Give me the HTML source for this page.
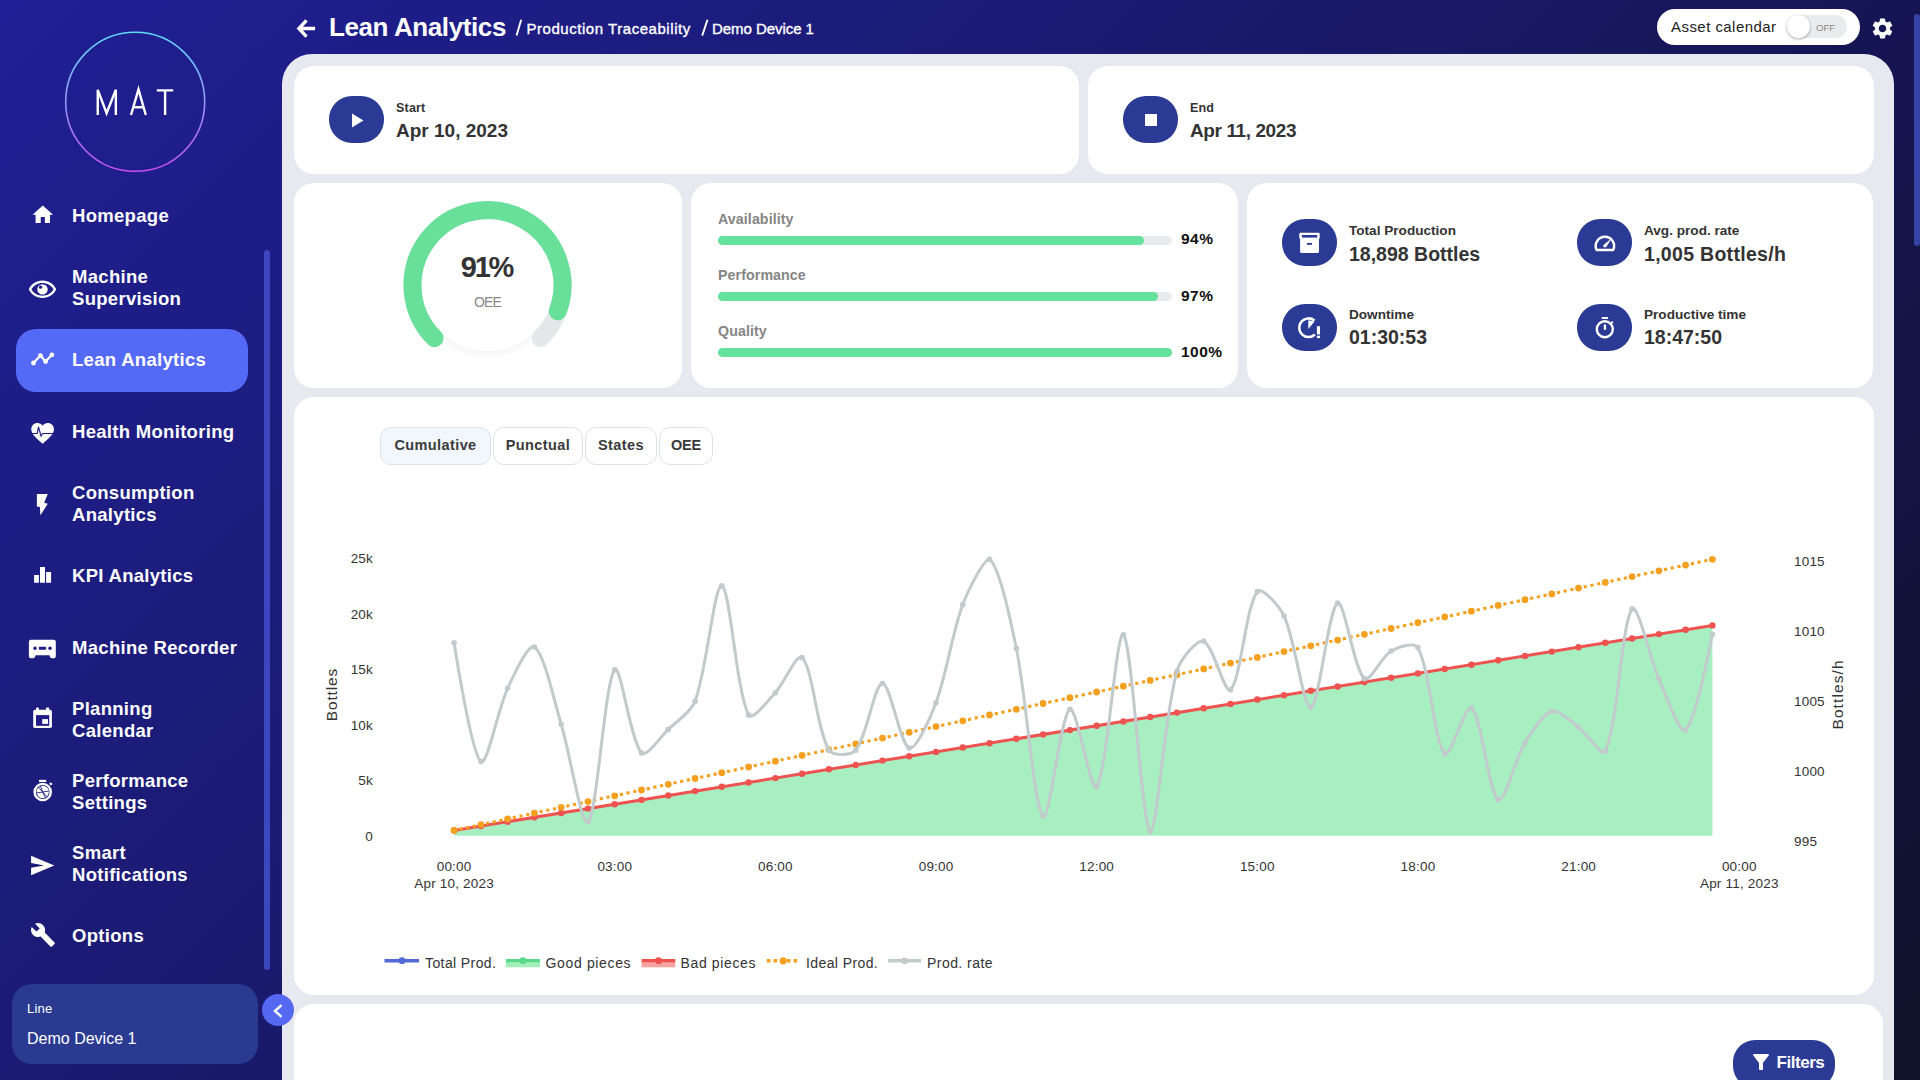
<!DOCTYPE html>
<html><head><meta charset="utf-8"><style>
*{box-sizing:border-box;margin:0;padding:0}
html,body{width:1920px;height:1080px;overflow:hidden}
body{font-family:"Liberation Sans",sans-serif;position:relative;
background:linear-gradient(135deg,#201f95 0%,#1b1b74 36%,#161553 64%,#0e1228 100%);}
.abs{position:absolute}
.navact{position:absolute;left:16px;width:232px;height:63px;border-radius:20px;background:#546af6}
.nicon{position:absolute;left:30px;width:24px;height:24px;fill:#fff}
.nlabel{position:absolute;left:72px;height:100px;width:190px;display:flex;align-items:center;color:#fff;font-weight:700;font-size:18.5px;line-height:22px;letter-spacing:0.3px}
.panel{position:absolute;left:282px;top:54px;width:1612px;height:1100px;background:#e8e8f0;border-radius:30px}
.card{position:absolute;background:#fff;border-radius:20px}
.ibtn{position:absolute;background:#2b3a94;border-radius:23px;width:55px;height:47px}
.lbl{position:absolute;font-weight:700;color:#333;white-space:nowrap}
.tab{position:absolute;top:427px;height:38px;border:1px solid #dfe2ea;border-radius:11px;background:#fff;font-weight:700;font-size:14.5px;color:#3a3a3a;letter-spacing:0.4px;padding-bottom:3px;display:flex;align-items:center;justify-content:center}
.ax{position:absolute;font-size:13.5px;color:#333;white-space:nowrap;letter-spacing:0.2px}
.leg{position:absolute;top:954.5px;font-size:14px;color:#333;white-space:nowrap;letter-spacing:0.5px}
</style></head><body>
<!-- sidebar -->
<svg class="abs" style="left:0;top:0" width="280" height="200">
<defs><linearGradient id="lg" x1="0" y1="0" x2="0" y2="1"><stop offset="0" stop-color="#5fdcf7"/><stop offset="1" stop-color="#c84ef2"/></linearGradient></defs>
<circle cx="135.2" cy="101.8" r="69.5" fill="none" stroke="url(#lg)" stroke-width="1.6"/>
</svg>
<svg class="abs" style="left:0;top:0" width="200" height="130"><g fill="none" stroke="#fff" stroke-width="2.4">
<path d="M97.75,115 V89.8 L106.6,113.2 L115.85,89.8 V115" stroke-linejoin="miter"/>
<path d="M131,115 L138.5,89.4 L145.8,115 M133.9,107.3 H143.1"/>
<path d="M156.8,90.4 H173.2 M165.1,90.4 V115"/></g></svg>
<div class="nlabel" style="top:166px"><span>Homepage</span></div><div class="nlabel" style="top:238px"><span>Machine<br>Supervision</span></div><div class="navact" style="top:329px"></div><div class="nlabel" style="top:310px"><span>Lean Analytics</span></div><div class="nlabel" style="top:382px"><span>Health Monitoring</span></div><div class="nlabel" style="top:454px"><span>Consumption<br>Analytics</span></div><div class="nlabel" style="top:526px"><span>KPI Analytics</span></div><div class="nlabel" style="top:598px"><span>Machine Recorder</span></div><div class="nlabel" style="top:670px"><span>Planning<br>Calendar</span></div><div class="nlabel" style="top:742px"><span>Performance<br>Settings</span></div><div class="nlabel" style="top:814px"><span>Smart<br>Notifications</span></div><div class="nlabel" style="top:886px"><span>Options</span></div><svg class="abs" style="left:0;top:0" width="280" height="1080" fill="#fff">
<g transform="translate(30.44,202.5) scale(1.03)"><path d="M10 20v-6h4v6h5v-8h3L12 3 2 12h3v8z"/></g>
<g transform="translate(27.5,275.35) scale(1.25,1.167)"><path d="M12 4.5C7 4.5 2.73 7.61 1 12c1.73 4.39 6 7.5 11 7.5s9.27-3.11 11-7.5c-1.73-4.39-6-7.5-11-7.5zm0 13c-3.79 0-7.17-2.13-8.82-5.5C4.83 8.63 8.21 6.5 12 6.5s7.17 2.13 8.82 5.5c-1.65 3.37-5.03 5.5-8.82 5.5z"/></g>
<circle cx="42.5" cy="289.4" r="5.2"/><circle cx="40.6" cy="287.2" r="1.6" fill="#1f1c86"/>
<path d="M33.5,363 L40.4,355.6 L45.6,361.5 L51.9,354.8" fill="none" stroke="#fff" stroke-width="2.2" stroke-linejoin="round"/>
<circle cx="33.5" cy="363" r="2.4"/><circle cx="40.4" cy="355.6" r="2.4"/><circle cx="45.6" cy="361.5" r="2.4"/><circle cx="51.9" cy="354.8" r="2.4"/>
<g transform="translate(29.0,419.6) scale(1.135)"><path d="M12 21.35l-1.45-1.32C5.4 15.36 2 12.28 2 8.5 2 5.42 4.42 3 7.5 3c1.74 0 3.41.81 4.5 2.09C13.09 3.81 14.76 3 16.5 3 19.58 3 22 5.42 22 8.5c0 3.78-3.4 6.86-8.55 11.54L12 21.35z"/>
<path d="M1,12.2 H7.2 L8.4,6.5 L10.6,14.5 L12,12.2 H23" fill="none" stroke="#1f1c86" stroke-width="1"/></g>
<path d="M36.9,494.1 H47.8 L44.1,502.7 L47.8,503.8 L40.4,515.2 L39.9,506.9 L36.9,506.6 Z"/>
<path d="M34.1,575h4.8v7.8h-4.8zM40,566.9h5v15.9h-5zM46.1,571.9h5v10.9h-5z"/>
<path d="M31,639.7 H53.8 Q55.8,639.7 55.8,641.7 V656.3 Q55.8,658.3 53.8,658.3 H52 Q50,658.3 49.5,655.3 H35.5 Q35,658.3 33,658.3 H31 Q28.9,658.3 28.9,656.3 V641.7 Q28.9,639.7 31,639.7Z"/>
<circle cx="35" cy="648.3" r="1.7" fill="#1f1c86"/><rect x="38.9" y="646.8" width="7.2" height="3" rx="0.8" fill="#1f1c86"/><circle cx="50" cy="648.3" r="1.7" fill="#1f1c86"/>
<path d="M35,709.8 H50 Q51.9,709.8 51.9,711.7 V726.2 Q51.9,728.1 50,728.1 H35 Q33.2,728.1 33.2,726.2 V711.7 Q33.2,709.8 35,709.8Z"/>
<rect x="36" y="707.6" width="3" height="3" rx="1"/><rect x="45.9" y="707.6" width="3.3" height="3" rx="1"/>
<rect x="36" y="715.1" width="13.2" height="10.7" fill="#1f1c86"/><rect x="42.2" y="719.1" width="5.8" height="4.8"/>
<rect x="39" y="779.8" width="7.2" height="2.2"/>
<circle cx="42.7" cy="792" r="8.1" fill="none" stroke="#fff" stroke-width="2.4"/>
<path d="M49.2,783.8 l1.6,-1.6 1.7,1.7 -1.6,1.6z"/>
<circle cx="42.7" cy="792" r="6.2"/>
<path d="M42.7,792 L38.2,786.8 M42.7,792 L48.9,791 M42.7,792 L45.5,798.2 M42.7,792 L36.5,793 M42.7,792 L40.5,785.9 M42.7,792 L47,796.8" stroke="#1f1c86" stroke-width="0.9"/>
<path d="M31.1,855.7 L54.3,865.5 L31.1,875.2 L31.1,867.8 L44.1,865.5 L31.1,863.1Z"/>
<g transform="translate(30,921.9) scale(1.08)"><path d="M22.7 19l-9.1-9.1c.9-2.3.4-5-1.5-6.9-2-2-5-2.4-7.4-1.3L9 6 6 9 1.6 4.7C.4 7.1.9 10.1 2.9 12.1c1.9 1.9 4.6 2.4 6.9 1.5l9.1 9.1c.4.4 1 .4 1.4 0l2.3-2.3c.5-.4.5-1.1.1-1.4z"/></g>
</svg>
<div class="abs" style="left:264px;top:250px;width:6px;height:720px;border-radius:3px;background:#3c47bf"></div>
<div class="abs" style="left:12px;top:984px;width:246px;height:80px;border-radius:20px;background:#2b3a91"></div>
<div class="abs" style="left:27px;top:1001px;font-size:13px;color:#fff;letter-spacing:0.2px">Line</div>
<div class="abs" style="left:27px;top:1029.5px;font-size:16px;color:#fff">Demo Device 1</div>
<!-- header -->
<svg class="abs" style="left:0;top:0" width="340" height="50"><path d="M315.1,28.5 H300.5 M306.5,20.4 L298.9,28.5 L306.5,36.6" fill="none" stroke="#fff" stroke-width="3.3"/></svg>
<div class="abs" style="left:329px;top:10px;font-size:26px;font-weight:700;color:#fff;letter-spacing:-0.4px;line-height:34px">Lean Analytics</div>
<svg class="abs" style="left:0;top:0" width="840" height="50"><path d="M521.2,19.8 L516.6,35.6 M707.5,19.8 L702.2,35.6" stroke="#fff" stroke-width="1.9"/></svg>
<div class="abs" style="left:526.4px;top:19.5px;font-size:15px;color:#fff;line-height:18px;letter-spacing:0.55px;-webkit-text-stroke:0.35px #fff">Production Traceability</div>
<div class="abs" style="left:712px;top:19.5px;font-size:15px;color:#fff;line-height:18px;letter-spacing:-0.05px;-webkit-text-stroke:0.35px #fff">Demo Device 1</div>
<div class="abs" style="left:1657px;top:9px;width:203px;height:36px;border-radius:18px;background:#fff"></div>
<div class="abs" style="left:1671px;top:17px;font-size:15px;color:#222;line-height:20px;letter-spacing:0.45px">Asset calendar</div>
<div class="abs" style="left:1787px;top:15px;width:60px;height:23px;border-radius:12px;background:#e9ecec"></div>
<div class="abs" style="left:1816px;top:21.5px;font-size:9.6px;color:#8a8a8a;line-height:12px">OFF</div>
<div class="abs" style="left:1787px;top:15px;width:23px;height:23px;border-radius:50%;background:#fff;box-shadow:0 1px 3px rgba(0,0,0,.35)"></div>
<svg class="abs" viewBox="0 0 24 24" style="left:1870px;top:16px;width:25px;height:25px;fill:#fff"><path d="M19.14 12.94c.04-.3.06-.61.06-.94 0-.32-.02-.64-.07-.94l2.03-1.58c.18-.14.23-.41.12-.61l-1.92-3.32c-.12-.22-.37-.29-.59-.22l-2.39.96c-.5-.38-1.03-.7-1.62-.94l-.36-2.54c-.04-.24-.24-.41-.48-.41h-3.840c-.24 0-.43.17-.47.41l-.36 2.54c-.59.24-1.13.57-1.62.94l-2.39-.96c-.22-.08-.47 0-.59.22L2.740 8.870c-.12.21-.08.47.12.61l2.03 1.58c-.05.3-.09.63-.09.94s.02.64.07.94l-2.03 1.58c-.18.14-.23.41-.12.61l1.92 3.32c.12.22.37.29.59.22l2.39-.96c.5.38 1.03.7 1.62.94l.36 2.54c.05.24.24.41.48.41h3.84c.24 0 .44-.17.47-.41l.36-2.54c.59-.24 1.13-.56 1.62-.94l2.39.96c.22.08.47 0 .59-.22l1.92-3.32c.12-.22.07-.47-.12-.61l-2.01-1.58zM12 15.6c-1.98 0-3.6-1.62-3.6-3.6s1.62-3.6 3.6-3.6 3.6 1.62 3.6 3.6-1.62 3.6-3.6 3.6z"/></svg>
<div class="abs" style="left:1914px;top:14px;width:6px;height:232px;border-radius:3px 3px 3px 3px;background:#3542a6"></div>

<!-- panel -->
<div class="panel"></div>
<div class="card" style="left:294px;top:66px;width:785px;height:108px"></div>
<div class="card" style="left:1088px;top:66px;width:786px;height:108px"></div>
<div class="ibtn" style="left:329px;top:96px"></div>
<svg class="abs" style="left:329px;top:96px" width="55" height="47"><path d="M23 17.5v14l11.5-7z" fill="#fff"/></svg>
<div class="lbl" style="left:396px;top:101px;font-size:12.5px;letter-spacing:0.2px">Start</div>
<div class="lbl" style="left:396px;top:119.5px;font-size:19px">Apr 10, 2023</div>
<div class="ibtn" style="left:1123px;top:96px"></div>
<div class="abs" style="left:1145px;top:114px;width:12px;height:12px;background:#fff"></div>
<div class="lbl" style="left:1190px;top:101px;font-size:12.5px;letter-spacing:0.2px">End</div>
<div class="lbl" style="left:1190px;top:119.5px;font-size:19px;letter-spacing:-0.4px">Apr 11, 2023</div>

<div class="card" style="left:294px;top:183px;width:388px;height:205px"></div>
<div class="card" style="left:691px;top:183px;width:547px;height:205px"></div>
<div class="card" style="left:1247px;top:183px;width:626px;height:205px"></div>
<!-- gauge -->
<svg class="abs" style="left:382px;top:180px" width="210" height="200">
<defs><radialGradient id="sh" cx="0.5" cy="0.5" r="0.5"><stop offset="0.8" stop-color="#000" stop-opacity="0.06"/><stop offset="1" stop-color="#000" stop-opacity="0"/></radialGradient></defs>
<circle cx="105.5" cy="108" r="72" fill="url(#sh)"/>
<circle cx="105.5" cy="105.2" r="66" fill="#fff"/>
<path d="M52.5,158.2 A75,75 0 1 1 158.5,158.2" fill="none" stroke="#e4e8e9" stroke-width="18" stroke-linecap="round"/>
<path d="M52.5,158.2 A75,75 0 1 1 175.8,131.2" fill="none" stroke="#68e09a" stroke-width="18" stroke-linecap="round"/>
</svg>
<div class="abs" style="left:382px;top:250px;width:211px;text-align:center;font-size:29px;font-weight:700;color:#333;line-height:34px;letter-spacing:-2.2px;text-indent:-2px">91%</div>
<div class="abs" style="left:382px;top:293px;width:211px;text-align:center;font-size:14px;color:#888;line-height:18px;letter-spacing:-0.8px">OEE</div>
<!-- bars -->
<div class="lbl" style="left:718px;top:211px;font-size:14.2px;color:#858585;letter-spacing:0.1px">Availability</div>
<div class="abs" style="left:718px;top:236px;width:454px;height:9px;border-radius:5px;background:#e9eaee"><div style="width:426px;height:9px;border-radius:5px;background:#64e19a"></div></div>
<div class="lbl" style="left:1181px;top:230px;font-size:15.5px;color:#111;letter-spacing:0.5px">94%</div>
<div class="lbl" style="left:718px;top:267px;font-size:14.2px;color:#858585;letter-spacing:0.1px">Performance</div>
<div class="abs" style="left:718px;top:292px;width:454px;height:9px;border-radius:5px;background:#e9eaee"><div style="width:440px;height:9px;border-radius:5px;background:#64e19a"></div></div>
<div class="lbl" style="left:1181px;top:287px;font-size:15.5px;color:#111;letter-spacing:0.5px">97%</div>
<div class="lbl" style="left:718px;top:323px;font-size:14.2px;color:#858585;letter-spacing:0.1px">Quality</div>
<div class="abs" style="left:718px;top:348px;width:454px;height:9px;border-radius:5px;background:#64e19a"></div>
<div class="lbl" style="left:1181px;top:343px;font-size:15.5px;color:#111;letter-spacing:0.5px">100%</div>
<!-- kpis -->
<div class="ibtn" style="left:1282px;top:219px"></div>
<div class="lbl" style="left:1349px;top:222.5px;font-size:13.6px">Total Production</div>
<div class="lbl" style="left:1349px;top:243px;font-size:19.5px">18,898 Bottles</div>
<div class="ibtn" style="left:1577px;top:219px"></div>
<div class="lbl" style="left:1644px;top:222.5px;font-size:13.6px">Avg. prod. rate</div>
<div class="lbl" style="left:1644px;top:243px;font-size:19.5px;letter-spacing:0.3px">1,005 Bottles/h</div>
<div class="ibtn" style="left:1282px;top:304px"></div>
<div class="lbl" style="left:1349px;top:306.5px;font-size:13.6px">Downtime</div>
<div class="lbl" style="left:1349px;top:326px;font-size:19.5px">01:30:53</div>
<div class="ibtn" style="left:1577px;top:304px"></div>
<div class="lbl" style="left:1644px;top:306.5px;font-size:13.6px">Productive time</div>
<div class="lbl" style="left:1644px;top:326px;font-size:19.5px">18:47:50</div>

<svg class="abs" style="left:0;top:0" width="1920" height="400">
<g fill="#fff">
<rect x="1299.3" y="232.8" width="20.4" height="6.1" rx="1"/>
<rect x="1301.9" y="235.0" width="15.3" height="2.6" fill="#2b3a94"/>
<path d="M1300.1,238.9 H1319 V251.4 Q1319,253 1317.4,253 H1301.7 Q1300.1,253 1300.1,251.4Z"/>
<rect x="1306.9" y="243" width="5.1" height="1.8" fill="#2b3a94"/>
</g>
<g fill="none" stroke="#fff" stroke-width="2.5">
<path d="M1596.6,250 A9.2,9.2 0 1 1 1613.2,250 Z" stroke-linejoin="round"/>
</g>
<path d="M1604.1,244.4 L1611.7,238.2 L1606.6,246.5 Q1604.5,248.2 1603.3,246.6 Q1602.6,245.5 1604.1,244.4Z" fill="#fff"/>
<path d="M1314.5,320.6 A9.3,9.3 0 1 0 1314.9,334.5" fill="none" stroke="#fff" stroke-width="2.6"/>
<path d="M1308.3,328.9 V320.2 L1314.6,321.4Z" fill="#fff"/>
<rect x="1316.9" y="326.2" width="3.1" height="8.2" fill="#fff"/><rect x="1316.9" y="335.7" width="3.1" height="2.4" fill="#fff"/>
<rect x="1601.7" y="317" width="6.4" height="1.9" fill="#fff"/>
<circle cx="1604.8" cy="329.2" r="8" fill="none" stroke="#fff" stroke-width="2.4"/>
<rect x="1603.8" y="324.5" width="2.3" height="5.3" fill="#fff"/>
<path d="M1610.6,322.6 l1.6,-1.6 1.3,1.3 -1.6,1.6z" fill="#fff"/>
</svg>
<!-- chart card -->
<div class="card" style="left:294px;top:397px;width:1580px;height:598px"></div>
<div class="tab" style="left:380px;width:111px;background:#f2f7fd">Cumulative</div>
<div class="tab" style="left:493px;width:90px">Punctual</div>
<div class="tab" style="left:585px;width:72px">States</div>
<div class="tab" style="left:659px;width:54px;letter-spacing:-0.2px">OEE</div>
<svg class="abs" style="left:0;top:0" width="1920" height="1080">
<path d="M454.1,835.8 L454.1,830.4 L1712.4,625.4 L1712.4,835.8 Z" fill="#a7efc1"/>
<path d="M454.1,830.4 L1712.4,625.4" stroke="#ee5350" stroke-width="3"/>
<g fill="#ee5350"><circle cx="454.1" cy="830.4" r="3.2"/><circle cx="480.9" cy="826.0" r="3.2"/><circle cx="507.6" cy="821.7" r="3.2"/><circle cx="534.4" cy="817.3" r="3.2"/><circle cx="561.2" cy="813.0" r="3.2"/><circle cx="588.0" cy="808.6" r="3.2"/><circle cx="614.7" cy="804.2" r="3.2"/><circle cx="641.5" cy="799.9" r="3.2"/><circle cx="668.3" cy="795.5" r="3.2"/><circle cx="695.1" cy="791.1" r="3.2"/><circle cx="721.8" cy="786.8" r="3.2"/><circle cx="748.6" cy="782.4" r="3.2"/><circle cx="775.4" cy="778.1" r="3.2"/><circle cx="802.1" cy="773.7" r="3.2"/><circle cx="828.9" cy="769.3" r="3.2"/><circle cx="855.7" cy="765.0" r="3.2"/><circle cx="882.5" cy="760.6" r="3.2"/><circle cx="909.2" cy="756.3" r="3.2"/><circle cx="936.0" cy="751.9" r="3.2"/><circle cx="962.8" cy="747.5" r="3.2"/><circle cx="989.5" cy="743.2" r="3.2"/><circle cx="1016.3" cy="738.8" r="3.2"/><circle cx="1043.1" cy="734.4" r="3.2"/><circle cx="1069.9" cy="730.1" r="3.2"/><circle cx="1096.6" cy="725.7" r="3.2"/><circle cx="1123.4" cy="721.4" r="3.2"/><circle cx="1150.2" cy="717.0" r="3.2"/><circle cx="1177.0" cy="712.6" r="3.2"/><circle cx="1203.7" cy="708.3" r="3.2"/><circle cx="1230.5" cy="703.9" r="3.2"/><circle cx="1257.3" cy="699.5" r="3.2"/><circle cx="1284.0" cy="695.2" r="3.2"/><circle cx="1310.8" cy="690.8" r="3.2"/><circle cx="1337.6" cy="686.5" r="3.2"/><circle cx="1364.4" cy="682.1" r="3.2"/><circle cx="1391.1" cy="677.7" r="3.2"/><circle cx="1417.9" cy="673.4" r="3.2"/><circle cx="1444.7" cy="669.0" r="3.2"/><circle cx="1471.4" cy="664.7" r="3.2"/><circle cx="1498.2" cy="660.3" r="3.2"/><circle cx="1525.0" cy="655.9" r="3.2"/><circle cx="1551.8" cy="651.6" r="3.2"/><circle cx="1578.5" cy="647.2" r="3.2"/><circle cx="1605.3" cy="642.8" r="3.2"/><circle cx="1632.1" cy="638.5" r="3.2"/><circle cx="1658.9" cy="634.1" r="3.2"/><circle cx="1685.6" cy="629.8" r="3.2"/><circle cx="1712.4" cy="625.4" r="3.2"/></g>
<path d="M454.1,830.4 L1712.4,559.3" stroke="#f5a01f" stroke-width="3" stroke-dasharray="3.2 3.647" stroke-dashoffset="1.6"/>
<g fill="#f5a01f"><circle cx="454.1" cy="830.4" r="3.4"/><circle cx="480.9" cy="824.6" r="3.4"/><circle cx="507.6" cy="818.9" r="3.4"/><circle cx="534.4" cy="813.1" r="3.4"/><circle cx="561.2" cy="807.3" r="3.4"/><circle cx="588.0" cy="801.6" r="3.4"/><circle cx="614.7" cy="795.8" r="3.4"/><circle cx="641.5" cy="790.0" r="3.4"/><circle cx="668.3" cy="784.3" r="3.4"/><circle cx="695.1" cy="778.5" r="3.4"/><circle cx="721.8" cy="772.7" r="3.4"/><circle cx="748.6" cy="767.0" r="3.4"/><circle cx="775.4" cy="761.2" r="3.4"/><circle cx="802.1" cy="755.4" r="3.4"/><circle cx="828.9" cy="749.6" r="3.4"/><circle cx="855.7" cy="743.9" r="3.4"/><circle cx="882.5" cy="738.1" r="3.4"/><circle cx="909.2" cy="732.3" r="3.4"/><circle cx="936.0" cy="726.6" r="3.4"/><circle cx="962.8" cy="720.8" r="3.4"/><circle cx="989.5" cy="715.0" r="3.4"/><circle cx="1016.3" cy="709.3" r="3.4"/><circle cx="1043.1" cy="703.5" r="3.4"/><circle cx="1069.9" cy="697.7" r="3.4"/><circle cx="1096.6" cy="692.0" r="3.4"/><circle cx="1123.4" cy="686.2" r="3.4"/><circle cx="1150.2" cy="680.4" r="3.4"/><circle cx="1177.0" cy="674.7" r="3.4"/><circle cx="1203.7" cy="668.9" r="3.4"/><circle cx="1230.5" cy="663.1" r="3.4"/><circle cx="1257.3" cy="657.4" r="3.4"/><circle cx="1284.0" cy="651.6" r="3.4"/><circle cx="1310.8" cy="645.8" r="3.4"/><circle cx="1337.6" cy="640.1" r="3.4"/><circle cx="1364.4" cy="634.3" r="3.4"/><circle cx="1391.1" cy="628.5" r="3.4"/><circle cx="1417.9" cy="622.7" r="3.4"/><circle cx="1444.7" cy="617.0" r="3.4"/><circle cx="1471.4" cy="611.2" r="3.4"/><circle cx="1498.2" cy="605.4" r="3.4"/><circle cx="1525.0" cy="599.7" r="3.4"/><circle cx="1551.8" cy="593.9" r="3.4"/><circle cx="1578.5" cy="588.1" r="3.4"/><circle cx="1605.3" cy="582.4" r="3.4"/><circle cx="1632.1" cy="576.6" r="3.4"/><circle cx="1658.9" cy="570.8" r="3.4"/><circle cx="1685.6" cy="565.1" r="3.4"/><circle cx="1712.4" cy="559.3" r="3.4"/></g>
<path d="M454.10,642.70C454.10,642.70 471.08,753.16 480.87,761.50C487.14,766.84 497.80,709.35 507.64,688.30C513.86,675.00 528.38,642.95 534.42,647.00C544.44,653.72 554.01,700.77 561.19,724.20C570.08,753.21 581.60,828.27 587.96,821.80C597.67,811.92 604.48,682.90 614.73,669.70C620.54,662.23 630.09,740.18 641.51,752.90C646.16,758.09 660.59,736.81 668.28,729.40C676.65,721.33 691.09,711.92 695.05,701.30C707.15,668.87 714.22,583.95 721.82,585.90C730.28,588.06 735.89,689.66 748.60,715.00C751.95,721.70 768.28,700.30 775.37,692.70C784.35,683.08 797.09,652.19 802.14,657.60C813.15,669.38 816.35,728.24 828.91,750.00C832.41,756.05 851.33,755.71 855.69,750.30C867.39,735.76 874.31,683.85 882.46,683.50C890.37,683.16 900.07,744.72 909.23,748.00C916.13,750.48 930.52,717.37 936.00,702.70C946.59,674.35 952.19,632.95 962.77,604.60C968.26,589.90 983.73,559.20 989.55,559.20C999.80,567.55 1010.65,620.96 1016.32,648.20C1026.71,698.09 1033.34,805.18 1043.09,816.30C1049.41,823.51 1060.65,714.38 1069.86,709.30C1076.71,705.53 1091.07,794.56 1096.64,786.80C1107.13,772.18 1116.38,628.87 1123.41,634.70C1132.44,642.19 1141.35,825.20 1150.18,831.20C1157.41,831.20 1164.07,716.79 1176.95,671.10C1180.13,659.82 1196.98,638.95 1203.73,641.30C1213.05,644.56 1224.84,695.05 1230.50,689.80C1240.90,680.14 1245.42,607.93 1257.27,591.60C1261.49,585.79 1279.61,606.43 1284.04,616.00C1295.68,641.14 1303.28,709.12 1310.81,707.30C1319.34,705.25 1328.38,608.04 1337.59,603.10C1344.44,599.43 1353.51,668.89 1364.36,678.60C1369.57,683.26 1381.69,656.46 1391.13,651.00C1397.76,647.16 1414.73,641.50 1417.90,647.60C1430.79,672.34 1433.86,741.62 1444.68,753.80C1449.92,759.71 1465.71,702.98 1471.45,707.90C1481.77,716.75 1488.53,793.36 1498.22,799.70C1504.59,803.86 1515.31,758.88 1524.99,742.90C1531.38,732.36 1542.59,714.01 1551.77,711.30C1558.65,709.27 1571.10,721.55 1578.54,727.10C1587.17,733.55 1602.11,758.37 1605.31,751.30C1618.17,722.94 1621.49,623.32 1632.08,609.00C1637.56,601.60 1649.78,658.40 1658.86,678.90C1665.84,694.67 1679.73,734.82 1685.63,729.90C1695.80,721.41 1712.40,634.20 1712.40,634.20" fill="none" stroke="#c1cacd" stroke-width="3" stroke-linejoin="round"/>
<g fill="#c1cacd"><circle cx="454.1" cy="642.7" r="2.8"/><circle cx="480.9" cy="761.5" r="2.8"/><circle cx="507.6" cy="688.3" r="2.8"/><circle cx="534.4" cy="647.0" r="2.8"/><circle cx="561.2" cy="724.2" r="2.8"/><circle cx="588.0" cy="821.8" r="2.8"/><circle cx="614.7" cy="669.7" r="2.8"/><circle cx="641.5" cy="752.9" r="2.8"/><circle cx="668.3" cy="729.4" r="2.8"/><circle cx="695.1" cy="701.3" r="2.8"/><circle cx="721.8" cy="585.9" r="2.8"/><circle cx="748.6" cy="715.0" r="2.8"/><circle cx="775.4" cy="692.7" r="2.8"/><circle cx="802.1" cy="657.6" r="2.8"/><circle cx="828.9" cy="750.0" r="2.8"/><circle cx="855.7" cy="750.3" r="2.8"/><circle cx="882.5" cy="683.5" r="2.8"/><circle cx="909.2" cy="748.0" r="2.8"/><circle cx="936.0" cy="702.7" r="2.8"/><circle cx="962.8" cy="604.6" r="2.8"/><circle cx="989.5" cy="559.2" r="2.8"/><circle cx="1016.3" cy="648.2" r="2.8"/><circle cx="1043.1" cy="816.3" r="2.8"/><circle cx="1069.9" cy="709.3" r="2.8"/><circle cx="1096.6" cy="786.8" r="2.8"/><circle cx="1123.4" cy="634.7" r="2.8"/><circle cx="1150.2" cy="831.2" r="2.8"/><circle cx="1177.0" cy="671.1" r="2.8"/><circle cx="1203.7" cy="641.3" r="2.8"/><circle cx="1230.5" cy="689.8" r="2.8"/><circle cx="1257.3" cy="591.6" r="2.8"/><circle cx="1284.0" cy="616.0" r="2.8"/><circle cx="1310.8" cy="707.3" r="2.8"/><circle cx="1337.6" cy="603.1" r="2.8"/><circle cx="1364.4" cy="678.6" r="2.8"/><circle cx="1391.1" cy="651.0" r="2.8"/><circle cx="1417.9" cy="647.6" r="2.8"/><circle cx="1444.7" cy="753.8" r="2.8"/><circle cx="1471.4" cy="707.9" r="2.8"/><circle cx="1498.2" cy="799.7" r="2.8"/><circle cx="1525.0" cy="742.9" r="2.8"/><circle cx="1551.8" cy="711.3" r="2.8"/><circle cx="1578.5" cy="727.1" r="2.8"/><circle cx="1605.3" cy="751.3" r="2.8"/><circle cx="1632.1" cy="609.0" r="2.8"/><circle cx="1658.9" cy="678.9" r="2.8"/><circle cx="1685.6" cy="729.9" r="2.8"/><circle cx="1712.4" cy="634.2" r="2.8"/></g>
</svg>
<div class="ax" style="left:300px;top:551px;width:73px;text-align:right">25k</div>
<div class="ax" style="left:300px;top:607px;width:73px;text-align:right">20k</div>
<div class="ax" style="left:300px;top:662px;width:73px;text-align:right">15k</div>
<div class="ax" style="left:300px;top:718px;width:73px;text-align:right">10k</div>
<div class="ax" style="left:300px;top:773px;width:73px;text-align:right">5k</div>
<div class="ax" style="left:300px;top:829px;width:73px;text-align:right">0</div>
<div class="ax" style="left:1794px;top:553.5px">1015</div>
<div class="ax" style="left:1794px;top:623.5px">1010</div>
<div class="ax" style="left:1794px;top:693.5px">1005</div>
<div class="ax" style="left:1794px;top:763.5px">1000</div>
<div class="ax" style="left:1794px;top:833.5px">995</div>
<div class="ax" style="left:282px;top:685.5px;width:100px;text-align:center;transform:rotate(-90deg);font-size:15.5px;letter-spacing:0.85px;padding-left:0.85px;line-height:18px">Bottles</div>
<div class="ax" style="left:1788px;top:685.5px;width:100px;text-align:center;transform:rotate(-90deg);font-size:15.5px;letter-spacing:1.1px;padding-left:1.1px;line-height:18px">Bottles/h</div>
<div class="ax" style="left:404.1px;top:858.5px;width:100px;text-align:center">00:00</div><div class="ax" style="left:564.8px;top:858.5px;width:100px;text-align:center">03:00</div><div class="ax" style="left:725.4px;top:858.5px;width:100px;text-align:center">06:00</div><div class="ax" style="left:886.1px;top:858.5px;width:100px;text-align:center">09:00</div><div class="ax" style="left:1046.7px;top:858.5px;width:100px;text-align:center">12:00</div><div class="ax" style="left:1207.3px;top:858.5px;width:100px;text-align:center">15:00</div><div class="ax" style="left:1368.0px;top:858.5px;width:100px;text-align:center">18:00</div><div class="ax" style="left:1528.7px;top:858.5px;width:100px;text-align:center">21:00</div><div class="ax" style="left:1689.3px;top:858.5px;width:100px;text-align:center">00:00</div><div class="ax" style="left:404.1px;top:876px;width:100px;text-align:center">Apr 10, 2023</div><div class="ax" style="left:1689.3px;top:876px;width:100px;text-align:center">Apr 11, 2023</div>
<svg class="abs" style="left:380px;top:950px" width="620" height="22">
<line x1="4.5" y1="10.7" x2="39" y2="10.7" stroke="#5468d6" stroke-width="3.4"/><circle cx="22" cy="10.7" r="3.4" fill="#5468d6"/>
<rect x="125.9" y="10.7" width="34" height="6.6" fill="#a3eeb9"/><line x1="125.9" y1="10.7" x2="159.9" y2="10.7" stroke="#58d98a" stroke-width="3.2"/><circle cx="142.9" cy="10.7" r="3.4" fill="#58d98a"/>
<rect x="261.6" y="10.7" width="33.7" height="6.6" fill="#f7a3a2"/><line x1="261.6" y1="10.7" x2="295.3" y2="10.7" stroke="#ee5350" stroke-width="3.2"/><circle cx="278.5" cy="10.7" r="3.4" fill="#ee5350"/>
<line x1="386.8" y1="10.8" x2="418" y2="10.8" stroke="#f5a01f" stroke-width="3.6" stroke-dasharray="3.6 3.1"/><circle cx="403.2" cy="10.8" r="3.6" fill="#f5a01f"/>
<line x1="508.2" y1="10.8" x2="541" y2="10.8" stroke="#c1cacd" stroke-width="3.4"/><circle cx="524.6" cy="10.8" r="3.4" fill="#c1cacd"/>
</svg>
<div class="leg" style="left:425px;letter-spacing:0.4px">Total Prod.</div>
<div class="leg" style="left:545.5px;letter-spacing:0.65px">Good pieces</div>
<div class="leg" style="left:680.5px;letter-spacing:0.63px">Bad pieces</div>
<div class="leg" style="left:806px;letter-spacing:0.4px">Ideal Prod.</div>
<div class="leg" style="left:927px;letter-spacing:0.45px">Prod. rate</div>

<div class="card" style="left:294px;top:1004px;width:1589px;height:200px"></div>
<div class="abs" style="left:1733px;top:1040px;width:102px;height:48px;border-radius:22px;background:#2b3a94"></div>
<svg class="abs" viewBox="0 0 24 24" style="left:1749px;top:1050px;width:24px;height:24px;fill:#fff"><path d="M4.25 5.61C6.27 8.2 10 13 10 13v6c0 .55.45 1 1 1h2c.55 0 1-.45 1-1v-6s3.72-4.8 5.74-7.39c.51-.66.04-1.61-.79-1.61H5.04c-.83 0-1.3.95-.79 1.61z"/></svg>
<div class="lbl" style="left:1776.5px;top:1053px;font-size:17px;color:#fff;letter-spacing:-0.45px">Filters</div>
<div class="abs" style="left:262px;top:994px;width:32px;height:32px;border-radius:50%;background:#5468f1"></div>
<svg class="abs" style="left:0;top:0" width="300" height="1080"><path d="M281.5,1005.2 L275,1011 L281.5,1016.8" fill="none" stroke="#fff" stroke-width="2.4"/></svg>
</body></html>
